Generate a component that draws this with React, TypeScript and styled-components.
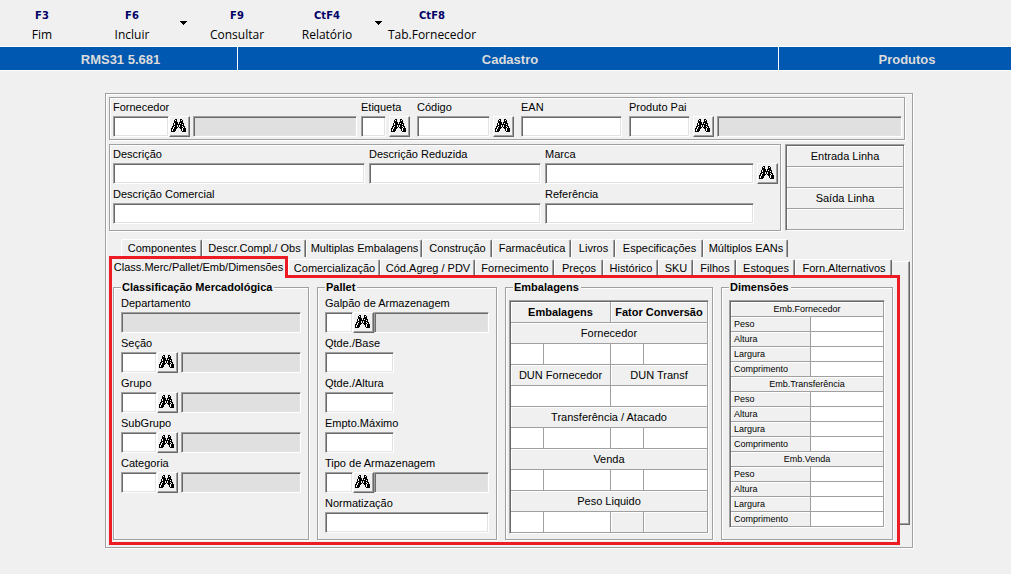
import React, { useId } from "react";
import styled, { createGlobalStyle, css } from "styled-components";

const color = {
  face: "#f0f0f0",
  shade: "#a0a0a0",
  dark: "#696969",
  light: "#e3e3e3",
  locked: "#e0e0e0",
  blue: "#0058b0",
  red: "#ed1c24",
  navy: "#000066",
};

const GlobalStyle = createGlobalStyle`
  *, *::before, *::after { box-sizing: border-box; }
  body {
    margin: 0;
    background: ${color.face};
    color: #000;
    font-family: "Liberation Sans", Arial, sans-serif;
    font-size: 11px;
  }
  button, input { font: inherit; color: inherit; margin: 0; border-radius: 0; }
`;

const etched = css`
  border: 1px solid ${color.shade};
  box-shadow: 1px 1px 0 #fff, inset 1px 1px 0 #fff;
`;

/* ---------- toolbar ---------- */

const Toolbar = styled.nav`
  display: flex;
  gap: 6px;
  height: 46px;
`;

const ToolGroup = styled.div`
  display: flex;
`;

const ToolButton = styled.button`
  display: flex;
  flex-direction: column;
  align-items: center;
  gap: 4px;
  width: 84px;
  padding: 9px 0 0;
  border: 0;
  background: none;
  font-family: "Open Sans", "Noto Sans", sans-serif;
  font-size: 12px;
  line-height: 16px;
  white-space: nowrap;
`;

const KeyName = styled.span`
  color: ${color.navy};
  font-family: "DejaVu Sans", sans-serif;
  font-size: 10px;
  font-weight: bold;
  line-height: 14px;
`;

const DropButton = styled.button`
  display: flex;
  align-items: center;
  justify-content: flex-end;
  width: 15px;
  padding: 0 2px 0 0;
  border: 0;
  background: none;
`;

const TitleBar = styled.header`
  display: grid;
  grid-template-columns: 237fr 541fr 233fr;
  height: 25px;
  border-top: 1px solid #fff;
  border-bottom: 1px solid #fff;
  background: ${color.blue};
  color: #dcdcdc;
  font-size: 13px;
  font-weight: bold;
  line-height: 25px;
  text-align: center;
`;

const TitleCell = styled.div<{ $indent: number }>`
  height: 23px;
  padding-left: ${(p) => p.$indent}px;
  & + & {
    border-left: 1px solid #fff;
  }
`;

/* ---------- form parts ---------- */

const Main = styled.main`
  padding: 22px 98px 26px 105px;
`;

const Window = styled.form`
  ${etched}
  padding: 3px 2px 2px 3px;
`;

const Heading = styled.div`
  display: flex;
  flex-direction: column;
  gap: 4px;
  padding-right: 5px;
`;

const KeyFrame = styled.section`
  ${etched}
  display: grid;
  grid-template-columns: minmax(0, 297fr) 97px 101px minmax(0, 273fr);
  gap: 7px;
  padding: 0 2px 2px 3px;
`;

const Pair = styled.div`
  display: grid;
  grid-template-columns: minmax(0, 1fr) 49px;
  gap: 4px;
`;

const NamesRow = styled.div`
  display: grid;
  grid-template-columns: minmax(0, 1fr) 120px;
  gap: 4px;
`;

const NamesFrame = styled.section`
  ${etched}
  display: grid;
  grid-template-columns: 252fr 172fr 233fr;
  gap: 1px 4px;
  padding: 0 2px 6px 3px;
`;

const FieldBox = styled.div<{ $span?: number; $trail?: number }>`
  grid-column: span ${(p) => p.$span ?? 1};
  min-width: 0;
  padding-right: ${(p) => p.$trail ?? 0}px;
`;

const FieldLabel = styled.label`
  display: block;
  height: 18px;
  line-height: 18px;
  white-space: nowrap;
`;

const FieldLine = styled.div<{ $gap: number }>`
  display: flex;
  gap: ${(p) => p.$gap}px;
`;

const sunken = css`
  height: 21px;
  border: 1px solid;
  border-color: ${color.shade} #fff #fff ${color.shade};
  box-shadow: inset 1px 1px 0 ${color.dark}, inset -1px -1px 0 ${color.light};
  outline: 0;
  padding: 0 3px;
`;

const TextInput = styled.input<{ $width?: number }>`
  ${sunken}
  background: #fff;
  min-width: 0;
  ${(p) => (p.$width ? `flex: none; width: ${p.$width}px;` : "flex: 1; width: 100%;")}
`;

const LockedInput = styled.input`
  ${sunken}
  flex: 1;
  min-width: 0;
  width: 100%;
  background: ${color.locked};
`;

const Lookup = styled.div`
  display: flex;
  flex: none;
`;

const SearchButton = styled.button`
  flex: none;
  display: flex;
  align-items: flex-start;
  width: 21px;
  height: 21px;
  padding: 2px 1px 1px;
  border: 1px solid;
  border-color: #fff ${color.dark} ${color.dark} #fff;
  background: ${color.face};
  box-shadow: inset -1px -1px 0 ${color.shade};
`;

const binocularRows = [
  "....##...##....",
  "...#o#...#o#...",
  "...###...###...",
  "...####.####...",
  "..#o###.#o###..",
  "..#o#######o#..",
  "..####.#.####..",
  ".##o##.#.##o##.",
  ".#o####.####o#.",
  "##o###...##o###",
  "#o###.....#o###",
  "#o###.....#o###",
  "####.......####",
];

const Binoculars = () => (
  <svg width="15" height="13" viewBox="0 0 15 13" shapeRendering="crispEdges" aria-hidden="true">
    {binocularRows.flatMap((row, y) =>
      [...row].map((c, x) =>
        c === "." ? null : (
          <rect key={`${x}-${y}`} x={x} y={y} width="1" height="1" fill={c === "#" ? "#000" : "#fff"} />
        ),
      ),
    )}
  </svg>
);

const DropArrow = () => (
  <svg width="7" height="4" viewBox="0 0 7 4" shapeRendering="crispEdges" aria-hidden="true">
    <path d="M0 0h7v1h-1v1h-1v1h-1v1h-1v-1h-1v-1h-1v-1h-1z" />
  </svg>
);

type FieldProps = {
  label: string;
  width?: number;
  search?: boolean;
  searchGap?: number;
  described?: boolean;
  describedGap?: number;
  locked?: boolean;
  span?: number;
  trail?: number;
};

function Field({
  label, width, search, searchGap = 0, described, describedGap = 3, locked, span, trail,
}: FieldProps) {
  const id = useId();
  return (
    <FieldBox $span={span} $trail={trail}>
      <FieldLabel htmlFor={id}>{label}</FieldLabel>
      <FieldLine $gap={described ? describedGap : searchGap}>
        {locked ? (
          <LockedInput id={id} readOnly />
        ) : described ? (
          <Lookup>
            <FieldLine $gap={searchGap}>
              <TextInput id={id} $width={width} />
              <SearchButton type="button" aria-label={`Pesquisar ${label}`}>
                <Binoculars />
              </SearchButton>
            </FieldLine>
          </Lookup>
        ) : (
          <>
            <TextInput id={id} $width={width} />
            {search && (
              <SearchButton type="button" aria-label={`Pesquisar ${label}`}>
                <Binoculars />
              </SearchButton>
            )}
          </>
        )}
        {described && <LockedInput readOnly aria-label={`${label} - nome`} />}
      </FieldLine>
    </FieldBox>
  );
}

/* ---------- grids of cells ---------- */

const Well = styled.div`
  border: 1px solid;
  border-color: ${color.shade} #fff #fff ${color.shade};
  box-shadow: inset 1px 1px 0 ${color.dark};
  padding: 1px 0 0 1px;
`;

const CellTable = styled.table<{ $row: number; $font: number }>`
  width: 100%;
  table-layout: fixed;
  border-collapse: separate;
  border-spacing: 0;
  font-size: ${(p) => p.$font}px;
  line-height: ${(p) => p.$row - 1}px;

  th, td {
    height: ${(p) => p.$row}px;
    padding: 0;
    border: 0 solid ${color.shade};
    border-width: 0 1px 1px 0;
    white-space: nowrap;
  }
  th {
    box-shadow: inset 1px 1px 0 #fff;
    font-weight: normal;
    text-align: center;
  }
  th[scope="row"] {
    padding-left: 3px;
    text-align: left;
  }
  thead th {
    font-weight: bold;
  }
`;

const InputCell = styled.td<{ $locked?: boolean }>`
  background: ${(p) => (p.$locked ? color.face : "#fff")};
  ${(p) => p.$locked && "box-shadow: inset 1px 1px 0 #fff;"}
`;

const CellInput = styled.input<{ $height: number }>`
  display: block;
  width: 100%;
  height: ${(p) => p.$height}px;
  padding: 0 2px;
  border: 0;
  outline: 0;
  background: transparent;
`;

/* ---------- tabs ---------- */

const BackTabs = styled.div<{ $cols: string }>`
  display: grid;
  grid-template-columns: ${(p) => p.$cols};
  height: 18px;
  margin-top: 8px;
  padding-left: 12px;
`;

const Notebook = styled.div`
  display: grid;
  grid-template-columns: minmax(0, 1fr) 10px;
  margin-top: -1px;
`;

const FrontTabs = styled.div<{ $cols: string }>`
  display: grid;
  grid-template-columns: ${(p) => p.$cols};
  align-items: end;
  height: 19px;
`;

const Tab = styled.button<{ $front?: boolean }>`
  height: ${(p) => (p.$front ? 16 : 18)}px;
  padding: ${(p) => (p.$front ? "1px 0 0 1px" : "0 0 2px 1px")};
  border: 0;
  border-top: 1px solid #fff;
  border-left: 1px solid #fff;
  border-right: 1px solid ${color.dark};
  border-radius: 2px 2px 0 0;
  box-shadow: inset -1px 0 0 ${color.shade};
  background: ${color.face};
  line-height: 14px;
  white-space: nowrap;
`;

const ActiveTab = styled.button`
  z-index: 1;
  height: 22px;
  margin-bottom: -3px;
  padding: 0 0 3px;
  border: 3px solid ${color.red};
  border-bottom: 0;
  background: ${color.face};
  line-height: 16px;
  white-space: nowrap;
`;

const TabFiller = styled.div`
  height: 14px;
  border-top: 1px solid #fff;
`;

const Page = styled.div`
  display: grid;
  grid-template-columns: 196fr 180fr 208fr 172fr;
  gap: 8px;
  padding: 3px 4px 2px 1px;
  border: 3px solid ${color.red};
  background: ${color.face};
`;

const PageEdge = styled.div`
  margin: 5px 0 20px;
  border-top: 1px solid #fff;
  border-right: 1px solid ${color.dark};
  border-bottom: 1px solid ${color.dark};
  box-shadow: inset -1px -1px 0 ${color.shade};
`;

const Group = styled.fieldset<{ $pad: string }>`
  ${etched}
  min-width: 0;
  margin: 0;
  padding: ${(p) => p.$pad};
`;

const GroupTitle = styled.legend`
  height: 13px;
  padding: 0 2px 0 1px;
  background: ${color.face};
  font-weight: bold;
  line-height: 13px;
  white-space: nowrap;
`;

const TableGroup = styled(Group)`
  ${GroupTitle} {
    margin-left: 4px;
  }
`;

const FieldStack = styled.div`
  display: grid;
  gap: 1px;
`;

/* ---------- data ---------- */

const backTabs: [string, number][] = [
  ["Componentes", 81], ["Descr.Compl./ Obs", 104], ["Multiplas Embalagens", 116],
  ["Construção", 70], ["Farmacêutica", 79], ["Livros", 44],
  ["Especificações", 88], ["Múltiplos EANs", 85],
];

const frontTabs: [string, number][] = [
  ["Comercialização", 92], ["Cód.Agreg / PDV", 95], ["Fornecimento", 79], ["Preços", 49],
  ["Histórico", 55], ["SKU", 35], ["Filhos", 43], ["Estoques", 59], ["Forn.Alternativos", 97],
];

const columns = (widths: number[]) => widths.map((w) => `minmax(0, ${w}fr)`).join(" ");

function QuantityRow({ name, locked }: { name: string; locked?: boolean }) {
  return (
    <tr>
      {[0, 1, 2, 3].map((i) => (
        <InputCell key={i} $locked={locked && i > 1}>
          <CellInput $height={20} aria-label={`${name} ${i + 1}`} readOnly={locked && i > 1} />
        </InputCell>
      ))}
    </tr>
  );
}

const QuantityBlock = ({ name, locked }: { name: string; locked?: boolean }) => (
  <>
    <tr><th colSpan={4}>{name}</th></tr>
    <QuantityRow name={name} locked={locked} />
  </>
);

const Tool = ({ keyName, label, menu }: { keyName: string; label: string; menu?: boolean }) => (
  <ToolGroup>
    <ToolButton type="button">
      <KeyName>{keyName}</KeyName>
      {label}
    </ToolButton>
    {menu && (
      <DropButton type="button" aria-label={`Opções de ${label}`}>
        <DropArrow />
      </DropButton>
    )}
  </ToolGroup>
);

export default function App() {
  return (
    <>
      <GlobalStyle />
      <Toolbar>
        <Tool keyName="F3" label="Fim" />
        <Tool keyName="F6" label="Incluir" menu />
        <Tool keyName="F9" label="Consultar" />
        <Tool keyName="CtF4" label="Relatório" menu />
        <Tool keyName="CtF8" label="Tab.Fornecedor" />
      </Toolbar>
      <TitleBar>
        <TitleCell $indent={4}>RMS31 5.681</TitleCell>
        <TitleCell $indent={4}>Cadastro</TitleCell>
        <TitleCell $indent={24}>Produtos</TitleCell>
      </TitleBar>
      <Main>
        <Window>
          <Heading>
            <KeyFrame>
              <Pair>
                <Field label="Fornecedor" width={56} described />
                <Field label="Etiqueta" width={25} search searchGap={3} />
              </Pair>
              <Field label="Código" search searchGap={3} />
              <Field label="EAN" />
              <Field label="Produto Pai" width={61} searchGap={3} described />
            </KeyFrame>
            <NamesRow>
              <NamesFrame>
                <Field label="Descrição" />
                <Field label="Descrição Reduzida" />
                <Field label="Marca" search searchGap={3} />
                <Field label="Descrição Comercial" span={2} />
                <Field label="Referência" trail={24} />
              </NamesFrame>
              <Well>
                <CellTable $row={21} $font={11}>
                  <tbody>
                    <tr><th>Entrada Linha</th></tr>
                    <tr><InputCell $locked /></tr>
                    <tr><th>Saída Linha</th></tr>
                    <tr><InputCell $locked /></tr>
                  </tbody>
                </CellTable>
              </Well>
            </NamesRow>
          </Heading>

          <BackTabs $cols={columns([...backTabs.map((t) => t[1]), 122])}>
            {backTabs.map(([name]) => (
              <Tab key={name} type="button">{name}</Tab>
            ))}
          </BackTabs>
          <Notebook>
            <div>
              <FrontTabs $cols={columns([179, ...frontTabs.map((t) => t[1]), 8])}>
                <ActiveTab type="button">Class.Merc/Pallet/Emb/Dimensões</ActiveTab>
                {frontTabs.map(([name]) => (
                  <Tab key={name} type="button" $front>{name}</Tab>
                ))}
                <TabFiller />
              </FrontTabs>
              <Page>
                <Group $pad="0 7px 6px">
                  <GroupTitle>Classificação Mercadológica</GroupTitle>
                  <FieldStack>
                    <Field label="Departamento" locked />
                    <Field label="Seção" width={36} described />
                    <Field label="Grupo" width={36} described />
                    <Field label="SubGrupo" width={36} described />
                    <Field label="Categoria" width={36} described />
                  </FieldStack>
                </Group>
                <Group $pad="0 7px 6px">
                  <GroupTitle>Pallet</GroupTitle>
                  <FieldStack>
                    <Field label="Galpão de Armazenagem" width={28} described describedGap={0} />
                    <Field label="Qtde./Base" width={69} />
                    <Field label="Qtde./Altura" width={69} />
                    <Field label="Empto.Máximo" width={69} />
                    <Field label="Tipo de Armazenagem" width={28} described describedGap={0} />
                    <Field label="Normatização" />
                  </FieldStack>
                </Group>
                <TableGroup $pad="6px 3px 5px">
                  <GroupTitle>Embalagens</GroupTitle>
                  <Well>
                    <CellTable $row={21} $font={11}>
                      <colgroup>
                        <col width="33" />
                        <col />
                        <col width="33" />
                        <col width="64" />
                      </colgroup>
                      <thead>
                        <tr>
                          <th colSpan={2}>Embalagens</th>
                          <th colSpan={2}>Fator Conversão</th>
                        </tr>
                      </thead>
                      <tbody>
                        <QuantityBlock name="Fornecedor" />
                        <tr>
                          <th colSpan={2}>DUN Fornecedor</th>
                          <th colSpan={2}>DUN Transf</th>
                        </tr>
                        <tr>
                          <InputCell colSpan={2}><CellInput $height={20} aria-label="DUN Fornecedor" /></InputCell>
                          <InputCell colSpan={2}><CellInput $height={20} aria-label="DUN Transf" /></InputCell>
                        </tr>
                        <QuantityBlock name="Transferência / Atacado" />
                        <QuantityBlock name="Venda" />
                        <QuantityBlock name="Peso Liquido" locked />
                      </tbody>
                    </CellTable>
                  </Well>
                </TableGroup>
                <Group $pad="6px 7px 5px">
                  <GroupTitle>Dimensões</GroupTitle>
                  <Well>
                    <CellTable $row={15} $font={9}>
                      <colgroup>
                        <col width="80" />
                        <col />
                      </colgroup>
                      <tbody>
                        {["Emb.Fornecedor", "Emb.Transferência", "Emb.Venda"].map((pack) => (
                          <React.Fragment key={pack}>
                            <tr><th colSpan={2}>{pack}</th></tr>
                            {["Peso", "Altura", "Largura", "Comprimento"].map((dim) => (
                              <tr key={dim}>
                                <th scope="row">{dim}</th>
                                <InputCell>
                                  <CellInput $height={14} aria-label={`${pack} ${dim}`} />
                                </InputCell>
                              </tr>
                            ))}
                          </React.Fragment>
                        ))}
                      </tbody>
                    </CellTable>
                  </Well>
                </Group>
              </Page>
            </div>
            <PageEdge />
          </Notebook>
        </Window>
      </Main>
    </>
  );
}
